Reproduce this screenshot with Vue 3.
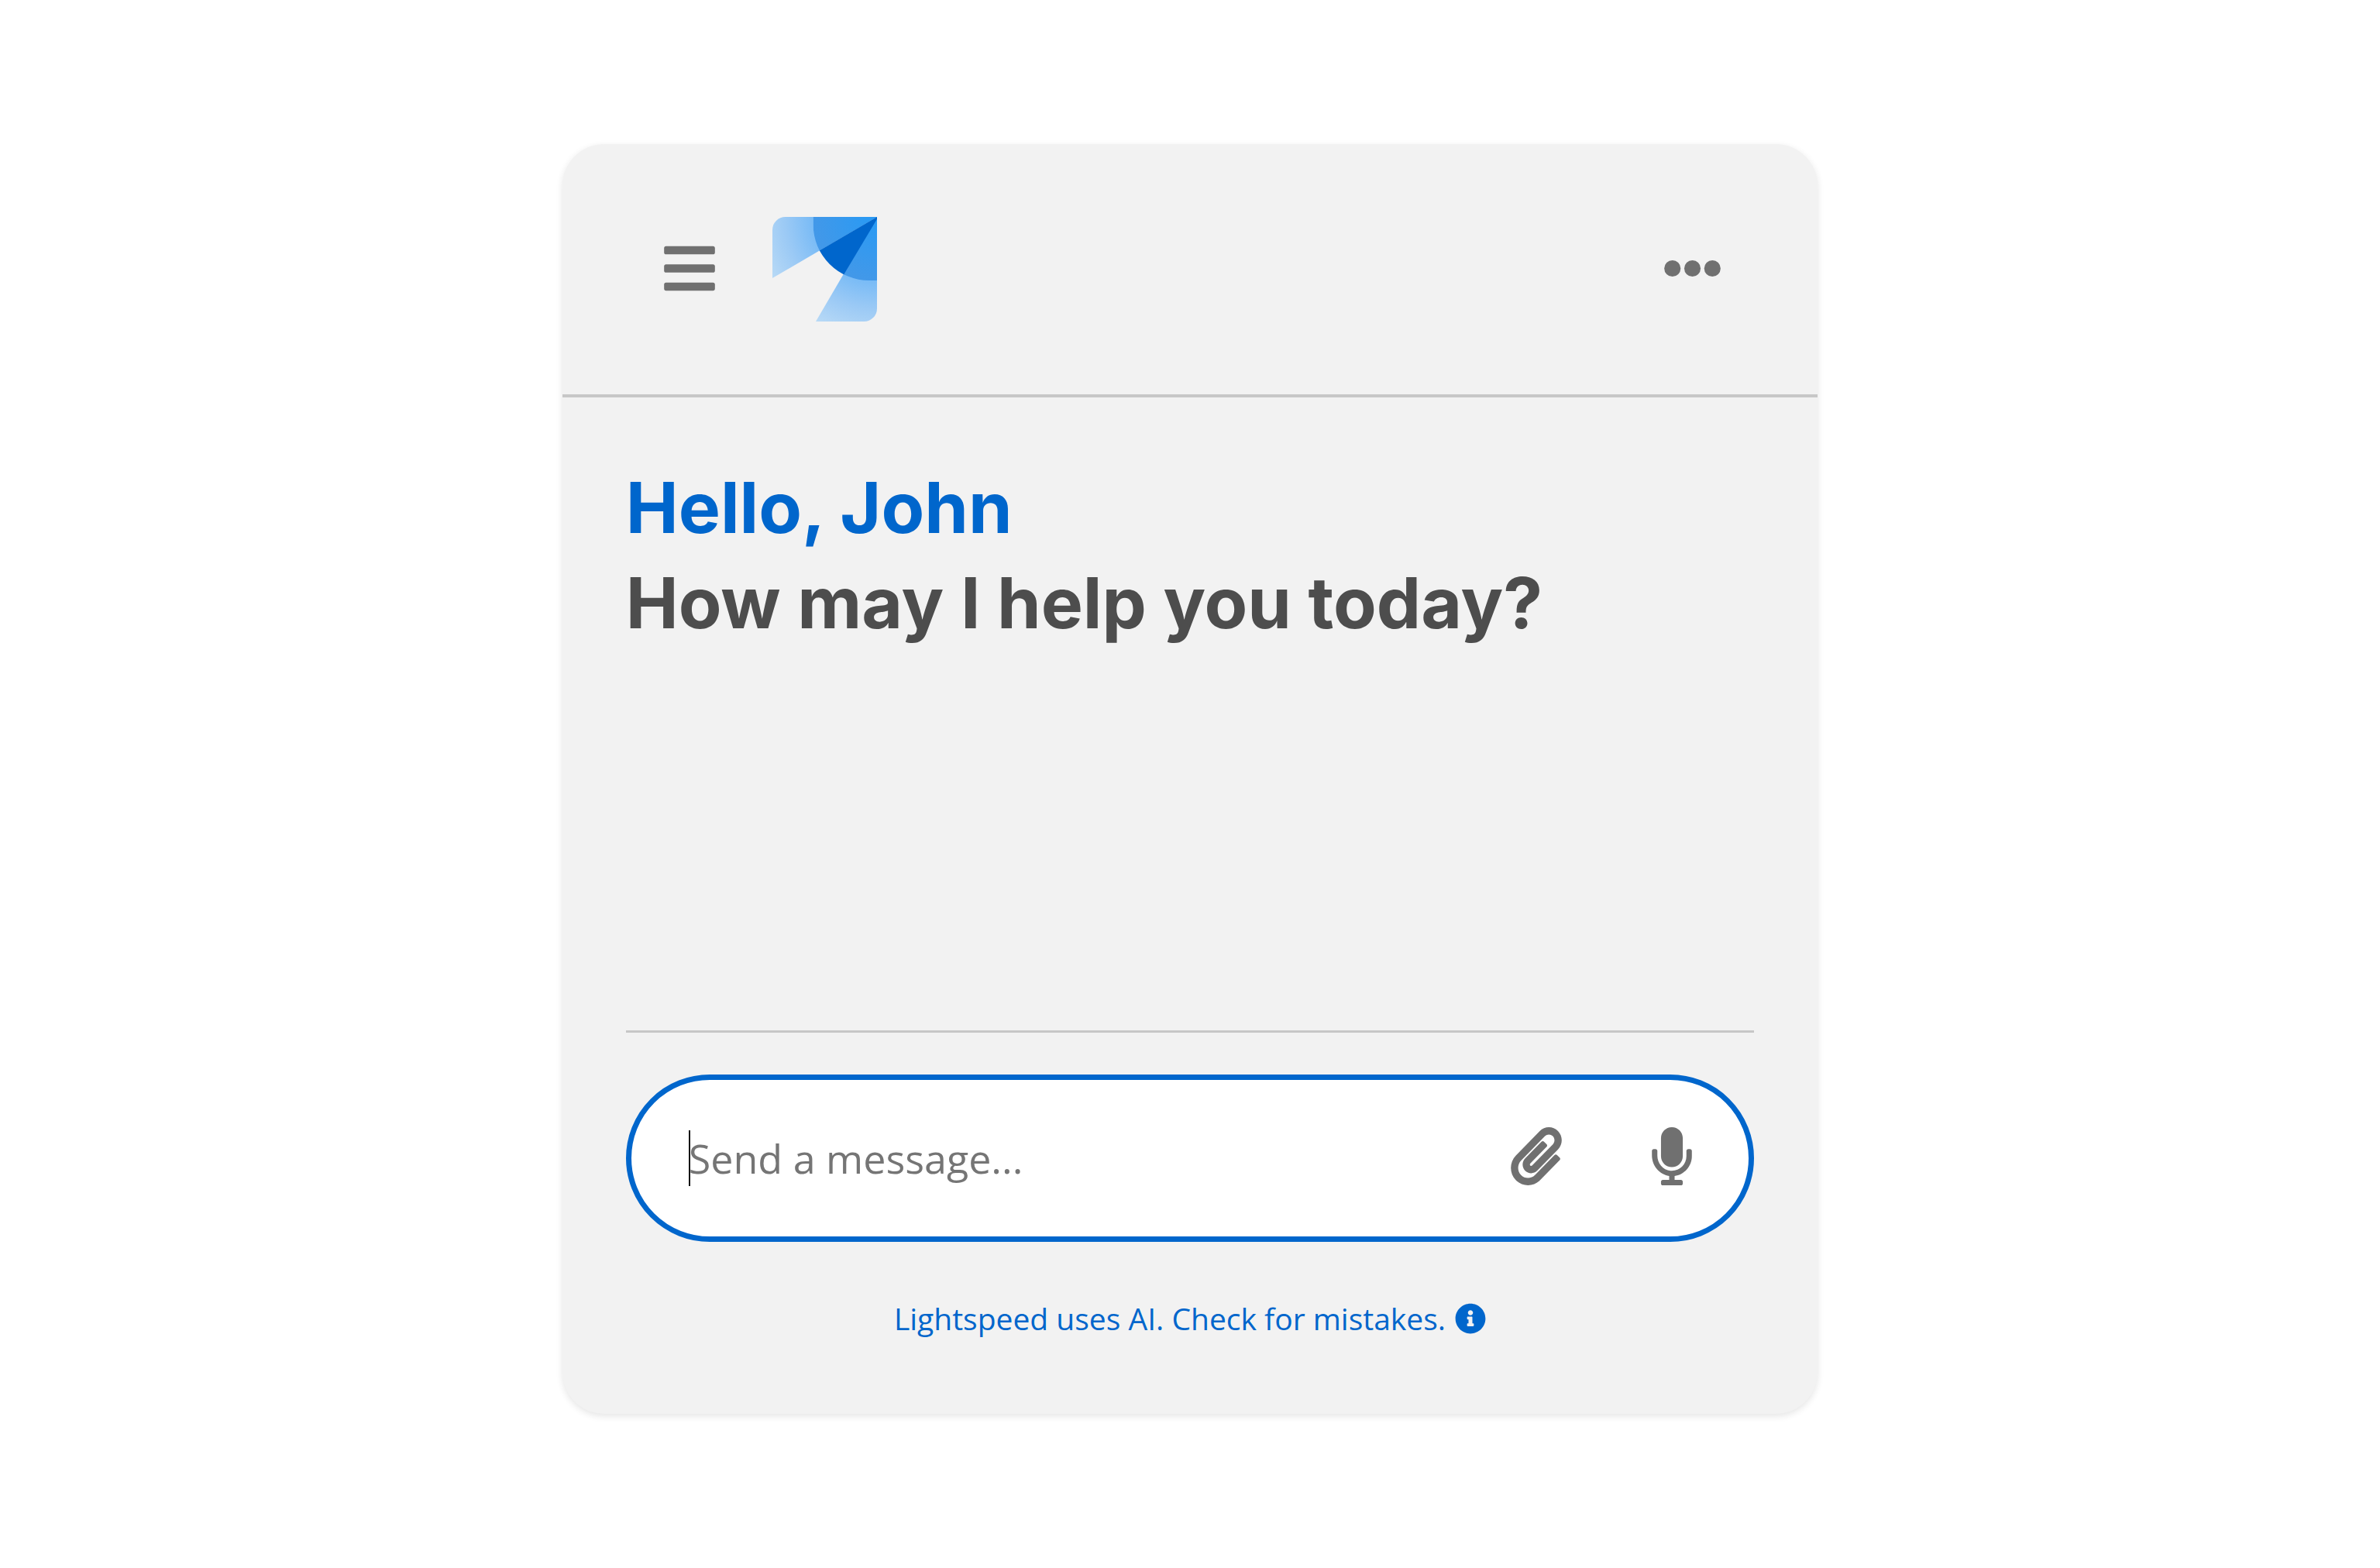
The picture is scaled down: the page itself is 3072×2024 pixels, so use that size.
<script setup>
import { ref } from 'vue'

const userName = 'John'
const message = ref('')
const focused = ref(true)
</script>

<template>
  <main class="page">
    <section class="card" aria-label="Chatbot">
      <header class="header">
        <div class="header-start">
          <button class="icon-button" type="button" aria-label="Toggle menu">
            <svg class="icon bars" viewBox="0 0 448 512" aria-hidden="true">
              <path d="M16 132h416c8.837 0 16-7.163 16-16V76c0-8.837-7.163-16-16-16H16C7.163 60 0 67.163 0 76v40c0 8.837 7.163 16 16 16zm0 160h416c8.837 0 16-7.163 16-16v-40c0-8.837-7.163-16-16-16H16c-8.837 0-16 7.163-16 16v40c0 8.837 7.163 16 16 16zm0 160h416c8.837 0 16-7.163 16-16v-40c0-8.837-7.163-16-16-16H16c-8.837 0-16 7.163-16 16v40c0 8.837 7.163 16 16 16z" />
            </svg>
          </button>
          <svg class="logo" viewBox="0 0 405 405" role="img" aria-label="Lightspeed">
            <defs>
              <radialGradient id="beam" gradientUnits="userSpaceOnUse" cx="405" cy="0" r="470">
                <stop offset="0.5" stop-color="#74b9f6" />
                <stop offset="0.75" stop-color="#9ac9f5" />
                <stop offset="1" stop-color="#b9daf6" />
              </radialGradient>
              <radialGradient id="core" gradientUnits="userSpaceOnUse" cx="405" cy="0" r="255">
                <stop offset="0.15" stop-color="#2b9af3" />
                <stop offset="1" stop-color="#4398e8" />
              </radialGradient>
              <clipPath id="dome">
                <path d="M158 0V30A216 216 0 0 0 375 246H405V0Z" />
              </clipPath>
            </defs>
            <path fill="url(#beam)" d="M0 50A50 50 0 0 1 50 0H405L0 237Z" />
            <path fill="url(#beam)" d="M405 0V355A50 50 0 0 1 355 405H168Z" />
            <g clip-path="url(#dome)">
              <path fill="url(#core)" d="M0 0H405V405H168L405 0L0 237Z" />
              <path fill="#0066cc" d="M405 0L0 237V405H168L405 8Z" />
            </g>
          </svg>
        </div>
        <button class="icon-button" type="button" aria-label="More options">
          <svg class="icon dots" viewBox="0 0 512 512" aria-hidden="true">
            <circle cx="80" cy="256" r="72" />
            <circle cx="256" cy="256" r="72" />
            <circle cx="432" cy="256" r="72" />
          </svg>
        </button>
      </header>

      <div class="content">
        <h1 class="greeting">
          <span class="hello">Hello, {{ userName }}</span>
          <span class="question">How may I help you today?</span>
        </h1>
      </div>

      <footer class="footer">
        <form class="message-bar" @submit.prevent>
          <div class="field">
            <input
              v-model="message"
              class="message"
              type="text"
              aria-label="Message"
              placeholder="Send a message..."
              @focus="focused = true"
            />
            <span v-if="focused && !message" class="caret" aria-hidden="true"></span>
          </div>
          <button class="icon-button" type="button" aria-label="Attach file">
            <svg class="icon clip" viewBox="0 0 448 512" aria-hidden="true">
              <path d="M43.246 466.142c-58.43-60.289-57.341-157.511 1.386-217.581L254.392 34c44.316-45.332 116.351-45.336 160.671 0 43.89 44.894 43.943 117.329 0 162.276L232.214 383.128c-29.855 30.537-78.633 30.111-107.982-.998-28.275-29.97-27.368-77.473 1.452-106.953l143.743-146.835c6.182-6.314 16.312-6.422 22.626-.241l22.861 22.379c6.315 6.182 6.422 16.312.241 22.626L171.427 319.927c-4.932 5.045-5.236 13.428-.648 18.292 4.372 4.634 11.245 4.711 15.688.165l182.849-186.851c19.613-20.062 19.613-52.725-.011-72.798-19.189-19.627-49.957-19.637-69.154 0L90.39 293.295c-34.763 35.56-35.299 93.12-1.191 128.313 34.01 35.093 88.985 35.137 123.058.286l172.06-175.999c6.177-6.319 16.307-6.433 22.626-.256l22.877 22.364c6.319 6.177 6.434 16.307.256 22.626l-172.06 175.998c-59.576 60.938-155.943 60.216-214.77-.485z" />
            </svg>
          </button>
          <button class="icon-button" type="button" aria-label="Use microphone">
            <svg class="icon mic" viewBox="0 0 352 512" aria-hidden="true">
              <path d="M176 352c53.02 0 96-42.98 96-96V96c0-53.02-42.98-96-96-96S80 42.98 80 96v160c0 53.02 42.98 96 96 96zm160-160h-16c-8.84 0-16 7.16-16 16v48c0 74.8-64.49 134.82-140.79 127.38C96.71 376.89 48 317.11 48 250.3V208c0-8.84-7.16-16-16-16H16c-8.84 0-16 7.16-16 16v40.16c0 89.64 63.97 169.55 152 181.69V464H96c-8.84 0-16 7.16-16 16v16c0 8.84 7.16 16 16 16h160c8.84 0 16-7.16 16-16v-16c0-8.84-7.16-16-16-16h-56v-33.77C285.71 418.47 352 344.9 352 256v-48c0-8.84-7.16-16-16-16z" />
            </svg>
          </button>
        </form>
        <a class="footnote" href="#about-ai">
          Lightspeed uses AI. Check for mistakes.
          <svg class="info" viewBox="0 0 512 512" aria-hidden="true">
            <path d="M256 8C119.043 8 8 119.083 8 256c0 136.997 111.043 248 248 248s248-111.003 248-248C504 119.083 392.957 8 256 8zm0 110c23.196 0 42 18.804 42 42s-18.804 42-42 42-42-18.804-42-42 18.804-42 42-42zm56 254c0 6.627-5.373 12-12 12h-88c-6.627 0-12-5.373-12-12v-24c0-6.627 5.373-12 12-12h12v-64h-12c-6.627 0-12-5.373-12-12v-24c0-6.627 5.373-12 12-12h64c6.627 0 12 5.373 12 12v100h12c6.627 0 12 5.373 12 12v24z" />
          </svg>
        </a>
      </footer>
    </section>
  </main>
</template>

<style>
body {
  background: #fff;
}
</style>

<style scoped>
.page {
  display: flex;
  justify-content: center;
  padding: 186px 0;
  font-family: "Open Sans", "Noto Sans", sans-serif;
}

.card {
  width: 52.75%;
  border-radius: 54px;
  background: #f2f2f2;
  box-shadow: 0 3px 8px rgba(41, 41, 41, 0.12);
}

.header {
  display: flex;
  align-items: center;
  justify-content: space-between;
  padding: 94px 114px 94px 121px;
  border-bottom: 4px solid #c7c7c7;
}

.header-start {
  display: flex;
  align-items: center;
  gap: 64px;
}

.icon-button {
  display: flex;
  padding: 0 10px 2px;
  border: 0;
  background: none;
  color: #707070;
  cursor: pointer;
}

.icon {
  display: block;
  height: 75px;
  fill: currentColor;
}

.bars,
.clip {
  width: 66px;
}

.dots {
  width: 75px;
}

.mic {
  width: 52px;
}

.logo {
  display: block;
  width: 135px;
  height: 135px;
}

.content {
  min-height: 736px;
  padding: 81px 82px 0;
}

.greeting {
  margin: 0;
  font-family: Inter, "Open Sans", sans-serif;
  font-size: 91px;
  font-weight: 700;
  line-height: 123px;
}

.greeting span {
  display: block;
}

.hello {
  color: #0066cc;
}

.question {
  color: #4d4d4d;
}

.footer {
  margin: 0 82px;
  padding: 54px 0 95px;
  border-top: 3px solid #c7c7c7;
}

.message-bar {
  display: flex;
  align-items: center;
  gap: 96px;
  height: 202px;
  padding: 0 63px 0 74px;
  border: 7px solid #0066cc;
  border-radius: 108px;
  background: #fff;
}

.message-bar .icon-button {
  padding-bottom: 6px;
}

.field {
  position: relative;
  display: flex;
  flex: 1;
}

.message {
  flex: 1;
  min-width: 0;
  height: 70px;
  padding: 0 0 2px;
  border: 0;
  outline: 0;
  background: none;
  color: #151515;
  font-family: inherit;
  font-size: 52px;
}

.message::placeholder {
  color: #757575;
  opacity: 1;
}

.caret {
  position: absolute;
  top: 0;
  left: 0;
  width: 2px;
  height: 72px;
  background: #151515;
}

.footnote {
  display: flex;
  align-items: center;
  justify-content: center;
  gap: 12px;
  margin-top: 70px;
  color: #0066cc;
  font-size: 39px;
  line-height: 57px;
  text-decoration: none;
}

.info {
  width: 40px;
  height: 40px;
  fill: currentColor;
}
</style>
